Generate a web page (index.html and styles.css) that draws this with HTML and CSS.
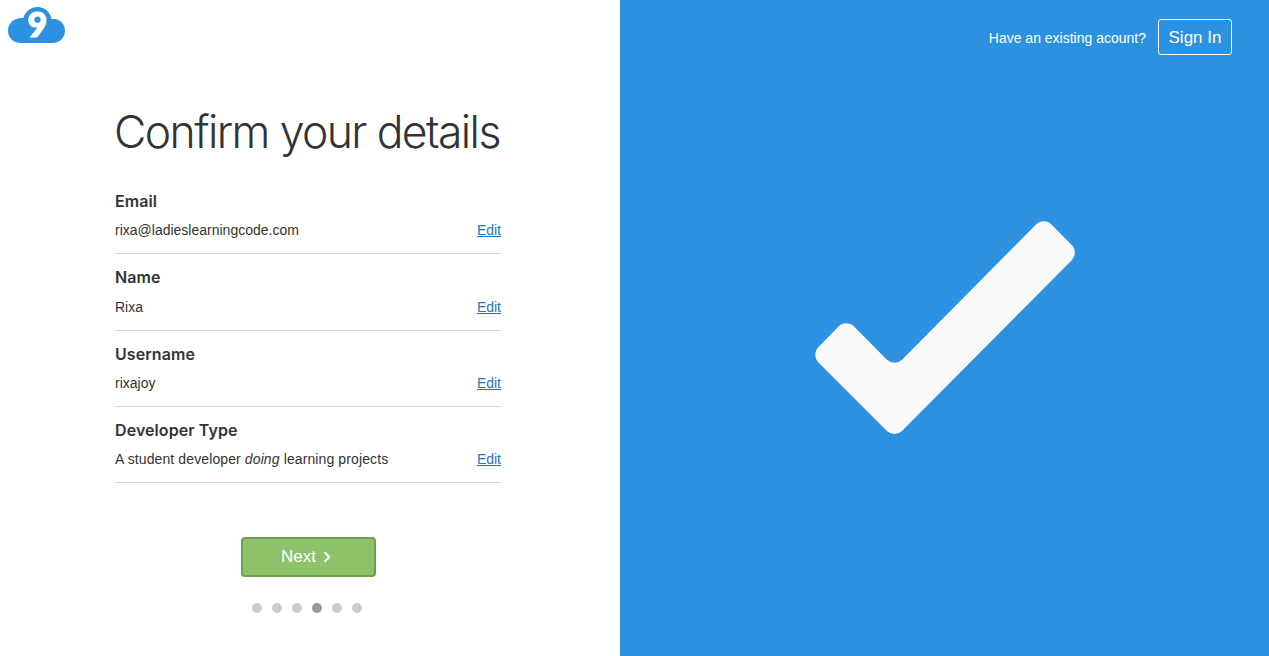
FILE: index.html
```
<!DOCTYPE html>
<html lang="en">
<head>
<meta charset="utf-8">
<title>Confirm your details</title>
<link rel="stylesheet" href="styles.css">
</head>
<body>
<div class="page">
  <main class="form-panel">
    <header class="brand">
      <svg class="logo" width="57" height="37" viewBox="0 0 57 37" role="img">
        <path class="cloud" d="M13 36C5 36 0 30.500 0 23.500 0 15.500 7 10 15.500 11 17.500 4 23 0 29.500 0 36.500 0 42.500 5 43.500 12.200 51 11 57 16.500 57 23.700 57 31 51.500 36 44 36Z"/>
        <text class="nine" x="19.500" y="29.500">9</text>
      </svg>
    </header>
    <section class="content">
      <h1 class="title">Confirm your details</h1>
      <dl class="details">
        <div class="row"><dt class="label">Email</dt><dd class="value"><span>rixa@ladieslearningcode.com</span><a class="edit" href="#">Edit</a></dd></div>
        <div class="row name"><dt class="label">Name</dt><dd class="value"><span>Rixa</span><a class="edit" href="#">Edit</a></dd></div>
        <div class="row"><dt class="label">Username</dt><dd class="value"><span>rixajoy</span><a class="edit" href="#">Edit</a></dd></div>
        <div class="row"><dt class="label">Developer Type</dt><dd class="value"><span class="developer-type">A student developer <em>doing</em> learning projects</span><a class="edit" href="#">Edit</a></dd></div>
      </dl>
      <button class="next" type="button">Next
        <svg class="chevron" width="8" height="12" viewBox="0 0 8 12"><path d="M1.500 1.200L6.300 6L1.500 10.800"/></svg>
      </button>
      <div class="dots"><i class="dot"></i><i class="dot"></i><i class="dot"></i><i class="dot active"></i><i class="dot"></i><i class="dot"></i></div>
    </section>
  </main>
  <aside class="side-panel">
    <div class="account"><span class="prompt">Have an existing acount?</span><a class="sign-in" href="#">Sign In</a></div>
    <svg class="check" width="260" height="214" viewBox="815 220.500 260 214">
      <path d="M1051.500 224L1071.500 244.300A11 11 0 0 1 1071.500 260L902 430.500A10.800 10.800 0 0 1 887 430.500L818.500 362A11 11 0 0 1 818.500 346.500L838.500 326A10.800 10.800 0 0 1 854 326L887 359.300A10.800 10.800 0 0 0 902 359.300L1036 224A10.900 10.900 0 0 1 1051.500 224Z"/>
    </svg>
  </aside>
</div>
</body>
</html>
```

FILE: styles.css
```
* { box-sizing: border-box; }
body {
  margin: 0;
  background: #fff;
  color: #333;
  font: 14px/20px "Liberation Sans", Arial, sans-serif;
}
.page { display: flex; height: 656px; overflow: hidden; }
.form-panel { width: 620px; flex: none; }
.brand { height: 100px; padding: 7px 8px; }
.logo { display: block; overflow: visible; }
.cloud { fill: #2c91e0; }
.nine {
  fill: #fff;
  stroke: #fff;
  stroke-width: 1.200px;
  font: 900 34px/1 Lato, sans-serif;
}
.content {
  width: 386px;
  margin-left: 115px;
  display: flex;
  flex-direction: column;
  align-items: center;
}
.title {
  align-self: flex-start;
  margin: 0 0 0 -1px;
  height: 78px;
  font: 300 44.500px/65px Inter, sans-serif;
  letter-spacing: -1.600px;
  white-space: nowrap;
}
.details { width: 100%; margin: 0; }
.row { height: 76.330px; padding-top: 13px; border-bottom: 1px solid #ddd; }
.label { font: 600 16px/20px Inter, sans-serif; letter-spacing: .080px; }
.value { margin: 9px 0 0; display: flex; justify-content: space-between; }
.name .value { margin-top: 10px; }
.developer-type { letter-spacing: .110px; }
.edit { color: #1b77c0; text-decoration: underline; }
.next {
  width: 135px;
  height: 40px;
  margin: 53.700px 0 0;
  padding: 0 4px 0 0;
  display: flex;
  align-items: center;
  justify-content: center;
  gap: 7px;
  border: 2px solid #6d9f4d;
  border-radius: 4px;
  background: #8dc26b;
  color: #fff;
  font: 17px/20px "Liberation Sans", Arial, sans-serif;
}
.chevron { margin-bottom: 1px; fill: none; stroke: #fff; stroke-width: 2; }
.dots { display: flex; gap: 10px; margin: 26px 2px 0 0; }
.dot { width: 10px; height: 10px; border-radius: 50%; background: #ccc; }
.active { background: #999; }
.side-panel { flex: 1; background: #2c91e0; color: #fff; }
.account {
  height: 55px;
  padding: 19px 37px 0 0;
  display: flex;
  align-items: center;
  justify-content: flex-end;
  gap: 12px;
}
.prompt { padding-top: 2px; }
.sign-in {
  width: 74px;
  height: 36px;
  padding-top: 1px;
  border: 1px solid #fff;
  border-radius: 3px;
  color: #fff;
  font-size: 17px;
  line-height: 34px;
  text-align: center;
  text-decoration: none;
}
.check { display: block; margin: 165.500px 0 0 195px; fill: #f9f9f9; }
```
